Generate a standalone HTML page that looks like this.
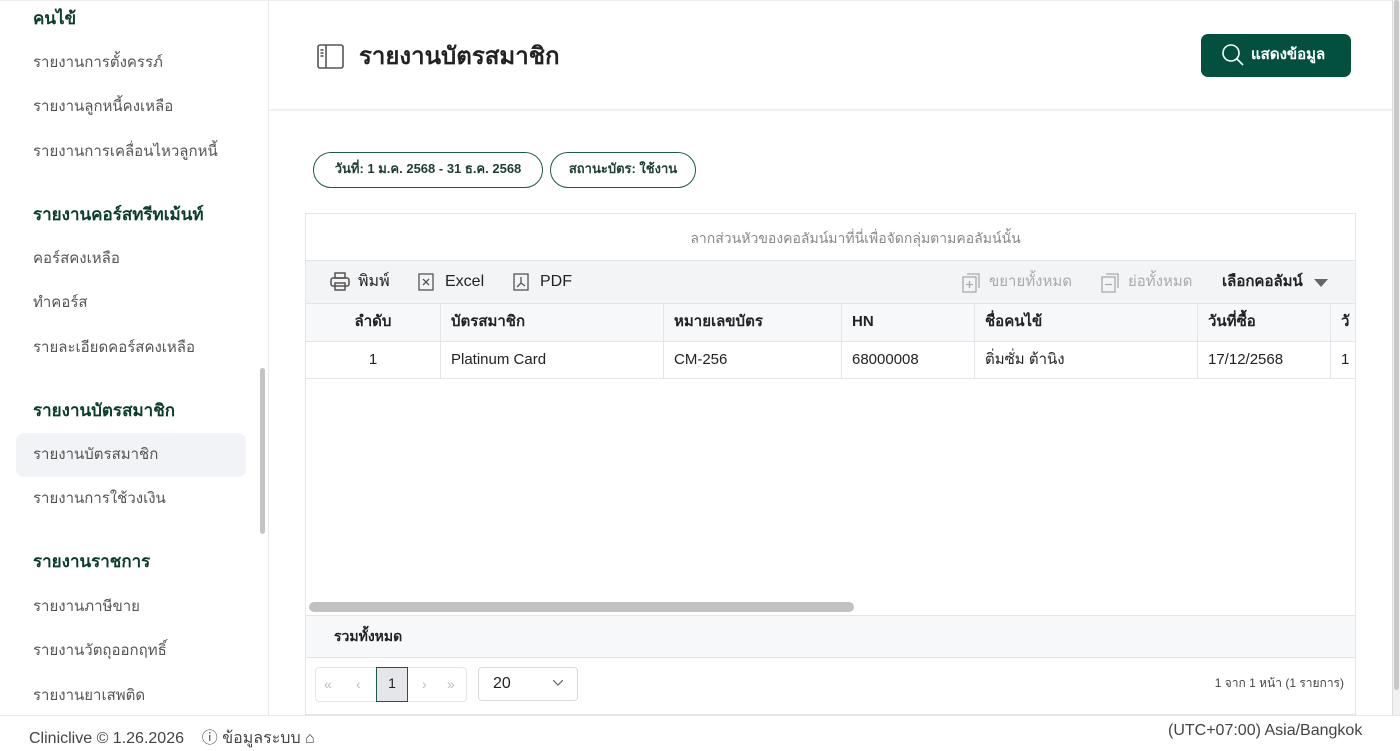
<!DOCTYPE html>
<html><head><meta charset="utf-8">
<style>
*{box-sizing:border-box;margin:0;padding:0}
body{width:1400px;height:737px;overflow:hidden;background:#fff;font-family:"Liberation Sans","Noto Sans CJK SC",sans-serif;color:#222;position:relative}
.abs{position:absolute}
.side{left:0;top:0;width:269px;height:715px;border-right:1px solid #e6e8ec;border-top:1px solid #eee}
.sh{position:absolute;left:33px;font-size:17px;font-weight:bold;color:#0b3d2e}
.si{position:absolute;left:33px;font-size:15px;color:#555}
.act{position:absolute;left:16px;top:432px;width:230px;height:44px;background:#f1f3f6;border-radius:8px}
.chip{position:absolute;top:152px;height:36px;border:1.5px solid #1e5a48;border-radius:18px;font-size:13px;font-weight:bold;color:#1e3d33;line-height:31px;text-align:center}
.grid{left:305px;top:213px;width:1051px;height:502px;border:1px solid #e3e5e8}
.cell{position:absolute;font-size:15px;top:0;height:100%;border-right:1px solid #e3e5e8;padding-left:10px;line-height:35px}
</style></head><body>
<div class="abs side">
<div class="sh" style="top:4px">คนไข้</div>
<div class="si" style="top:49px">รายงานการตั้งครรภ์</div>
<div class="si" style="top:93px">รายงานลูกหนี้คงเหลือ</div>
<div class="si" style="top:138px">รายงานการเคลื่อนไหวลูกหนี้</div>
<div class="sh" style="top:200px">รายงานคอร์สทรีทเม้นท์</div>
<div class="si" style="top:245px">คอร์สคงเหลือ</div>
<div class="si" style="top:289px">ทำคอร์ส</div>
<div class="si" style="top:334px">รายละเอียดคอร์สคงเหลือ</div>
<div class="sh" style="top:396px">รายงานบัตรสมาชิก</div>
<div class="act"></div>
<div class="si" style="top:441px">รายงานบัตรสมาชิก</div>
<div class="si" style="top:485px">รายงานการใช้วงเงิน</div>
<div class="sh" style="top:547px">รายงานราชการ</div>
<div class="si" style="top:593px">รายงานภาษีขาย</div>
<div class="si" style="top:637px">รายงานวัตถุออกฤทธิ์</div>
<div class="si" style="top:682px">รายงานยาเสพติด</div>
<div class="abs" style="left:260px;top:367px;width:5px;height:166px;background:#c4c4c4;border-radius:3px"></div>
</div>
<div class="abs" style="left:269px;top:0;width:1123px;height:1px;background:#eee"></div>
<div class="abs" style="left:1392px;top:0;width:8px;height:715px;background:#f1f1f1;border-left:1px solid #ddd"></div>
<div class="abs" style="left:1394px;top:0;width:5px;height:690px;background:#c8c8c8;border-radius:3px"></div>
<svg class="abs" style="left:317px;top:44px" width="28" height="26" viewBox="0 0 28 26" fill="none" stroke="#555" stroke-width="1.6"><rect x="1" y="1" width="25" height="23" rx="2"/><line x1="9" y1="1" x2="9" y2="24"/><line x1="3.5" y1="6" x2="6.5" y2="6"/><line x1="3.5" y1="9" x2="6.5" y2="9"/><line x1="3.5" y1="12" x2="6.5" y2="12"/></svg>
<div class="abs" style="left:359px;top:36px;font-size:24px;font-weight:bold;color:#222">รายงานบัตรสมาชิก</div>
<div class="abs" style="left:1201px;top:34px;width:150px;height:43px;background:#03503f;border-radius:7px;color:#fff;font-size:15px;font-weight:bold;line-height:41px;padding-left:50px">แสดงข้อมูล</div>
<svg class="abs" style="left:1221px;top:43px" width="26" height="26" viewBox="0 0 26 26" fill="none" stroke="#fff" stroke-width="1.6"><circle cx="10" cy="10" r="8"/><line x1="16" y1="16" x2="22" y2="22"/></svg>
<div class="abs" style="left:269px;top:109px;width:1123px;height:2px;background:#eef0f3"></div>
<div class="chip" style="left:313px;width:230px">วันที่: 1 ม.ค. 2568 - 31 ธ.ค. 2568</div>
<div class="chip" style="left:550px;width:146px">สถานะบัตร: ใช้งาน</div>
<div class="abs grid">
<div class="abs" style="left:0;top:3px;width:1049px;height:44px;border-bottom:1px solid #e3e5e8;text-align:center;font-size:14px;color:#888;line-height:42px;padding-left:50px">ลากส่วนหัวของคอลัมน์มาที่นี่เพื่อจัดกลุ่มตามคอลัมน์นั้น</div>
<div class="abs" style="left:0;top:47px;width:1049px;height:43px;background:#f3f4f6;border-bottom:1px solid #e3e5e8;font-size:16px;line-height:41px">
<svg class="abs" style="left:24px;top:11px" width="20" height="20" viewBox="0 0 20 20" fill="none" stroke="#555" stroke-width="1.5"><rect x="5" y="1" width="10" height="5"/><rect x="1" y="6" width="18" height="8" rx="2"/><rect x="5" y="11" width="10" height="7"/></svg>
<span class="abs" style="left:52px">พิมพ์</span>
<svg class="abs" style="left:112px;top:12px" width="16" height="18" viewBox="0 0 16 18" fill="none" stroke="#555" stroke-width="1.3"><rect x="1" y="1" width="14" height="16"/><path d="M5 6l6 6M11 6l-6 6"/></svg>
<span class="abs" style="left:139px">Excel</span>
<svg class="abs" style="left:207px;top:12px" width="16" height="18" viewBox="0 0 16 18" fill="none" stroke="#555" stroke-width="1.3"><rect x="1" y="1" width="14" height="16"/><path d="M8 4v6l-4 4M8 10l4 3"/></svg>
<span class="abs" style="left:234px">PDF</span>
<svg class="abs" style="left:656px;top:12px" width="18" height="20" viewBox="0 0 18 20" fill="none" stroke="#aaa" stroke-width="1.3"><rect x="1" y="4" width="13" height="15"/><path d="M5 1h12v14"/><path d="M7.5 8v7M4 11.5h7"/></svg>
<span class="abs" style="left:683px;color:#aaa;font-size:15px">ขยายทั้งหมด</span>
<svg class="abs" style="left:795px;top:12px" width="18" height="20" viewBox="0 0 18 20" fill="none" stroke="#aaa" stroke-width="1.3"><rect x="1" y="4" width="13" height="15"/><path d="M5 1h12v14"/><path d="M4 11.5h7"/></svg>
<span class="abs" style="left:822px;color:#aaa;font-size:15px">ย่อทั้งหมด</span>
<span class="abs" style="left:916px;font-size:15px;font-weight:bold;color:#222">เลือกคอลัมน์</span>
<svg class="abs" style="left:1008px;top:18px" width="14" height="8"><path d="M0 0h14L7 8z" fill="#666"/></svg>
</div>
<div class="abs" style="left:0;top:90px;width:1049px;height:38px;background:#f7f8fa;border-bottom:1px solid #e3e5e8;font-weight:bold">
<div class="cell" style="left:0;width:135px;text-align:center;padding:0">ลำดับ</div>
<div class="cell" style="left:135px;width:223px">บัตรสมาชิก</div>
<div class="cell" style="left:358px;width:178px">หมายเลขบัตร</div>
<div class="cell" style="left:536px;width:133px">HN</div>
<div class="cell" style="left:669px;width:223px">ชื่อคนไข้</div>
<div class="cell" style="left:892px;width:133px">วันที่ซื้อ</div>
<div class="cell" style="left:1025px;width:24px;border:0">วั</div>
</div>
<div class="abs" style="left:0;top:128px;width:1049px;height:37px;border-bottom:1px solid #e3e5e8">
<div class="cell" style="left:0;width:135px;text-align:center;padding:0">1</div>
<div class="cell" style="left:135px;width:223px">Platinum Card</div>
<div class="cell" style="left:358px;width:178px">CM-256</div>
<div class="cell" style="left:536px;width:133px">68000008</div>
<div class="cell" style="left:669px;width:223px">ติ่มซั่ม ต้านิง</div>
<div class="cell" style="left:892px;width:133px">17/12/2568</div>
<div class="cell" style="left:1025px;width:24px;border:0">1</div>
</div>
<div class="abs" style="left:3px;top:388px;width:545px;height:10px;background:#c1c1c1;border-radius:5px"></div>
<div class="abs" style="left:0;top:401px;width:1049px;height:43px;background:#f7f8fa;border-top:1px solid #e3e5e8;border-bottom:1px solid #e3e5e8;font-size:14px;font-weight:bold;line-height:41px;padding-left:28px">รวมทั้งหมด</div>
<div class="abs" style="left:9px;top:453px;width:152px;height:35px;border:1px solid #e3e5e8;border-radius:4px;color:#bbb;font-size:14px;line-height:33px">
<span class="abs" style="left:8px">«</span><span class="abs" style="left:40px">‹</span>
<div class="abs" style="left:60px;top:-1px;width:32px;height:35px;background:#e4e6ea;border:1.5px solid #1e5a48;color:#222;text-align:center;line-height:30px">1</div>
<span class="abs" style="left:106px">›</span><span class="abs" style="left:131px">»</span>
</div>
<div class="abs" style="left:172px;top:453px;width:100px;height:34px;border:1px solid #d8dade;border-radius:4px;font-size:16px;line-height:32px;padding-left:14px">20
<svg class="abs" style="left:74px;top:12px" width="10" height="6" fill="none" stroke="#666" stroke-width="1.2"><path d="M0 0l5 5 5-5"/></svg></div>
<div class="abs" style="right:11px;top:460px;font-size:12px;color:#444">1 จาก 1 หน้า (1 รายการ)</div>
</div>
<div class="abs" style="left:0;top:715px;width:1400px;height:22px;border-top:1px solid #e6e8ec;background:#fff"></div>
<div class="abs" style="left:29px;top:724px;font-size:16px;color:#444">Cliniclive © 1.26.2026 &nbsp;&nbsp; ⓘ ข้อมูลระบบ ⌂</div>
<div class="abs" style="left:1168px;top:722px;font-size:16px;color:#444">(UTC+07:00) Asia/Bangkok</div>
</body></html>
